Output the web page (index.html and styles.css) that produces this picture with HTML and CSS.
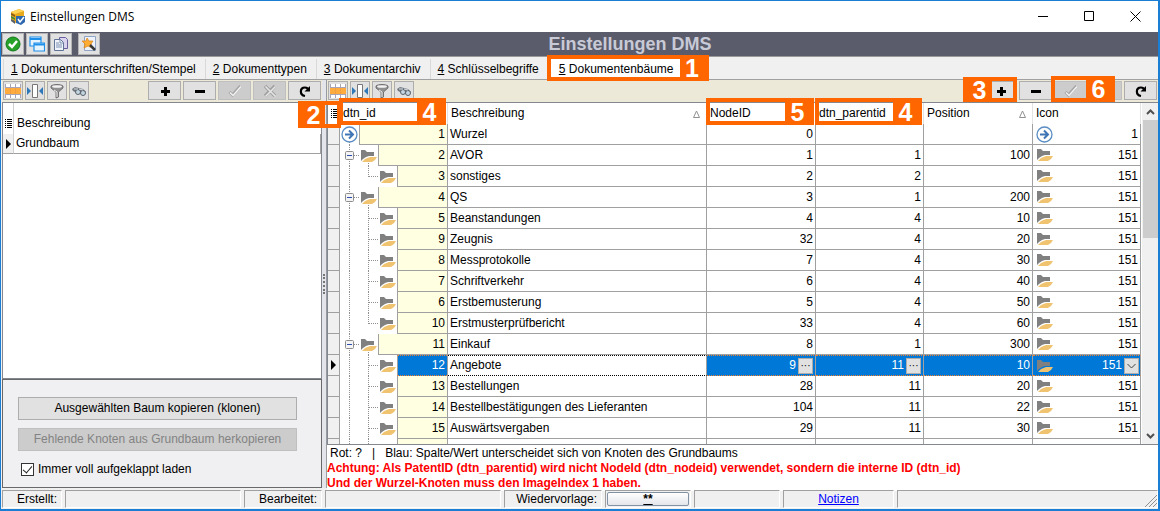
FILE: index.html
```html
<!DOCTYPE html>
<html lang="de">
<head>
<meta charset="utf-8">
<title>Einstellungen DMS</title>
<link rel="stylesheet" href="styles.css">
</head>
<body>
<svg class="defs" aria-hidden="true">
  <symbol id="folder" viewBox="0 0 17 14"><path fill="#808080" d="M1 1h4l2 2h7v4H9L6 8l-3 2-2 2z"/><path fill="#f0c370" d="M2 13l3-3 5-2h7l-2 3-3 2z"/></symbol>
  <symbol id="arrow" viewBox="0 0 17 17"><circle cx="8.500" cy="8.500" r="7.500" fill="#fff" stroke="#5a8dc4" stroke-width="1.300"/><path d="M4 8.500h8M8 4.500l4 4-4 4" fill="none" stroke="#3f74b5" stroke-width="2"/></symbol>
  <symbol id="minusbox" viewBox="0 0 9 9"><rect x=".5" y=".5" width="8" height="8" rx="1" fill="#f4f4f4" stroke="#8c8c8c"/><path d="M2 4.500h5" stroke="#2f4fb0"/></symbol>
  <symbol id="sort" viewBox="0 0 7 8"><path d="M3.500 1L6.500 7.500H.5z" fill="none" stroke="#909090"/></symbol>
  <symbol id="cols" viewBox="0 0 16 16"><path fill="#fff" d="M0 1h16v14H0z"/><path fill="#ffab3d" d="M0 5h16v6H0z"/><path d="M0 4.500h16M0 11.500h16M5.500 1v14M10.500 1v14M.5 1v14M15.500 1v14" stroke="#a9a3b8" fill="none"/><path d="M0 5h16v6H0z" fill="#ffab3d"/><path d="M5.500 5v6M10.500 5v6" stroke="#f0a040"/></symbol>
  <symbol id="fit" viewBox="0 0 16 16"><path d="M5.500 1.500h5v13h-5z" fill="#fff" stroke="#777"/><path fill="#2f78b8" d="M0 4l4 4-4 4zM16 4l-4 4 4 4z"/></symbol>
  <symbol id="funnel" viewBox="0 0 16 16"><path d="M2 3c2-2 10-2 12 0v2L9.500 9v5L7 15V9L2 5z" fill="#909090" stroke="#606060" stroke-width=".8"/><ellipse cx="8" cy="3.500" rx="5" ry="1.300" fill="#f2f2f2"/><path d="M5 7l3 2v5" stroke="#eee" fill="none"/></symbol>
  <symbol id="binoc" viewBox="0 0 16 16"><path d="M1 6l3-2 8 2 3 3-4 2-5-1-4-2z" fill="#707880"/><circle cx="7" cy="9" r="2.500" fill="#c3d5e0" stroke="#59626c"/><circle cx="12" cy="10" r="2.500" fill="#c3d5e0" stroke="#59626c"/><path d="M3 6l4 0M8 6l4 1" stroke="#d9dee2"/></symbol>
  <symbol id="plus" viewBox="0 0 16 16"><path d="M4 8.500h9M8.500 4v9" stroke="#000" stroke-width="3"/></symbol>
  <symbol id="minus" viewBox="0 0 16 16"><path d="M3 8.500h10" stroke="#000" stroke-width="3"/></symbol>
  <symbol id="check" viewBox="0 0 16 16"><path d="M2.500 9l3 3 8-9" fill="none" stroke="#a4a4a4" stroke-width="3"/><path d="M3 9.500l3 3 8-9" fill="none" stroke="#f2f2f2" stroke-width="1.500"/></symbol>
  <symbol id="cross" viewBox="0 0 16 16"><path d="M3 3l10 10M13 3L3 13" stroke="#a0a0a0" stroke-width="3.500"/><path d="M3.500 3.500l10 10M13.500 3.500l-10 10" stroke="#e6e6e6" stroke-width="1.500"/></symbol>
  <symbol id="refresh" viewBox="0 0 16 16"><path d="M8 13C2.500 12 2.500 4.500 8 4.500c2 0 3 1 3.500 2.500" fill="none" stroke="#000" stroke-width="2.200"/><path d="M13 3v5.500H7.500z"/></symbol>
  <symbol id="list" viewBox="0 0 8 11"><path d="M0 1.500h1M0 3.500h1M0 5.500h1M0 7.500h1M0 9.500h1M2 1.500h5M2 3.500h5M2 5.500h5M2 7.500h5M2 9.500h5" stroke="#000"/></symbol>
  <symbol id="current" viewBox="0 0 5 10"><path d="M0 0l5 5-5 5z"/></symbol>
</svg>
<div class="window">
  <header class="titlebar">
    <svg class="appicon" viewBox="0 0 16 16"><path fill="#e9a91c" d="M1 3l8-3 5 2v8l-9 4-4-4z"/><path fill="#ffd45a" d="M1 3l8-3 5 2-9 3z"/><path fill="#8a5a16" d="M1 4l4 2v2L1 6z"/><path fill="#3c8a4a" d="M1 7l4 2v2L1 9z"/><path fill="#59616b" d="M1 10l4 2v3l-4-3z"/><path fill="#2d67ae" d="M6 7h9v6l-4 3-5-2z"/><path d="M8 10l2 3 4-5" fill="none" stroke="#fff" stroke-width="1.500"/></svg>
    <span class="caption">Einstellungen DMS</span>
    <button class="winbtn" aria-label="Minimieren"><svg viewBox="0 0 11 11"><path d="M0 5.500h10" stroke="#000"/></svg></button>
    <button class="winbtn" aria-label="Maximieren"><svg viewBox="0 0 11 11"><path d="M.5 .5h9v9h-9z" fill="none" stroke="#000"/></svg></button>
    <button class="winbtn" aria-label="Schließen"><svg viewBox="0 0 11 11"><path d="M.5 .5l10 10M10.500 .5l-10 10" stroke="#000"/></svg></button>
  </header>
  <div class="banner">
    <button class="big" aria-label="OK"><svg viewBox="0 0 16 16"><circle cx="8" cy="8" r="7" fill="#27a229" stroke="#12791a"/><path d="M4 8l3 3 5-6" fill="none" stroke="#fff" stroke-width="2.500"/></svg></button>
    <button class="big" aria-label="Fenster"><svg viewBox="0 0 16 16"><path d="M1 1h11v9H1z" fill="#e6f4ff" stroke="#1e90ea" stroke-width="1.200"/><path d="M1 3h11" stroke="#1e90ea" stroke-width="2"/><path d="M5 7h10.500v8H5z" fill="#e6f4ff" stroke="#1e90ea" stroke-width="1.200"/><path d="M5 8.500h10" stroke="#1e90ea" stroke-width="2"/></svg></button>
    <button class="big" aria-label="Kopieren"><svg viewBox="0 0 16 16"><path d="M6.500 1.500h6l2 2v9h-8z" fill="#d9d3ee" stroke="#6a60a0"/><path d="M1.500 3.500h6l3 3v8h-9z" fill="#f0f4fa" stroke="#5f7396"/><path d="M7 4v3h3M3 7h3M3 9h6M3 11h6" fill="none" stroke="#7a8fb0"/></svg></button>
    <button class="big wizard" aria-label="Assistent"><svg viewBox="0 0 16 16"><path d="M3.500 .5h11v14h-11z" fill="#eef3fb" stroke="#90a5c6"/><path d="M6 2l2 3 4 0-2 3 1 4-4-2-4 2 1-4-3-3 4 0z" fill="#ffad33" stroke="#d98218" stroke-width=".7"/><path d="M9 9l5 5" stroke="#383838" stroke-width="2.500"/></svg></button>
    <h1>Einstellungen DMS</h1>
  </div>
  <nav class="tabs">
    <button class="tab"><u>1</u> Dokumentunterschriften/Stempel</button>
    <button class="tab"><u>2</u> Dokumenttypen</button>
    <button class="tab"><u>3</u> Dokumentarchiv</button>
    <button class="tab"><u>4</u> Schlüsselbegriffe</button>
    <button class="tab active"><u>5</u> Dokumentenbäume<span class="callout c-tab"><b>1</b></span></button>
  </nav>
  <main class="main">
    <section class="left">
      <div class="tools">
        <button class="tool" aria-label="Spalten"><svg><use href="#cols"/></svg></button>
        <button class="tool" aria-label="Breite"><svg><use href="#fit"/></svg></button>
        <button class="tool" aria-label="Filter"><svg><use href="#funnel"/></svg></button>
        <button class="tool" aria-label="Suchen"><svg><use href="#binoc"/></svg></button>
        <span class="space"></span>
        <button class="nav" aria-label="Neu"><svg><use href="#plus"/></svg></button>
        <button class="nav" aria-label="Löschen"><svg><use href="#minus"/></svg></button>
        <button class="nav" aria-label="Speichern" disabled><svg><use href="#check"/></svg></button>
        <button class="nav" aria-label="Abbrechen" disabled><svg><use href="#cross"/></svg></button>
        <button class="nav" aria-label="Aktualisieren"><svg><use href="#refresh"/></svg></button>
      </div>
      <div class="listbox">
        <table class="list">
          <thead><tr><th class="mark"><svg class="i-list"><use href="#list"/></svg></th><th>Beschreibung</th></tr></thead>
          <tbody><tr><td class="mark"><svg class="i-cur"><use href="#current"/></svg></td><td>Grundbaum</td></tr></tbody>
        </table>
      </div>
      <div class="options">
        <button class="action">Ausgewählten Baum kopieren (klonen)</button>
        <button class="action" disabled>Fehlende Knoten aus Grundbaum herkopieren</button>
        <label class="check"><input type="checkbox" checked>Immer voll aufgeklappt laden</label>
      </div>
    </section>
    <div class="splitter"><span></span></div>
    <section class="right">
      <div class="tools">
        <button class="tool" aria-label="Spalten"><svg><use href="#cols"/></svg></button>
        <button class="tool" aria-label="Breite"><svg><use href="#fit"/></svg></button>
        <button class="tool" aria-label="Filter"><svg><use href="#funnel"/></svg></button>
        <button class="tool" aria-label="Suchen"><svg><use href="#binoc"/></svg></button>
        <span class="space"></span>
        <button class="nav" aria-label="Neu"><svg><use href="#plus"/></svg><span class="callout c-plus"><b>3</b></span></button>
        <button class="nav" aria-label="Löschen"><svg><use href="#minus"/></svg></button>
        <button class="nav" aria-label="Speichern" disabled><svg><use href="#check"/></svg><span class="callout c-save"><b>6</b></span></button>
        <button class="nav" aria-label="Abbrechen" disabled><svg><use href="#cross"/></svg></button>
        <button class="nav" aria-label="Aktualisieren"><svg><use href="#refresh"/></svg></button>
      </div>
      <div class="gridbox">
        <table class="grid">
          <colgroup><col class="w-mark"><col class="w-num"><col><col class="w-wide"><col class="w-num"><col class="w-wide"><col class="w-num"></colgroup>
          <thead><tr>
            <th class="mark"><svg class="i-list"><use href="#list"/></svg><span class="callout c-mark"><b>2</b></span></th>
            <th>dtn_id<span class="callout c-col"><b>4</b></span></th>
            <th>Beschreibung<svg class="i-sort"><use href="#sort"/></svg></th>
            <th>NodeID<span class="callout c-col"><b>5</b></span></th>
            <th>dtn_parentid<span class="callout c-col"><b>4</b></span></th>
            <th>Position<svg class="i-sort"><use href="#sort"/></svg></th>
            <th>Icon</th>
          </tr></thead>
          <tbody>
            <tr><td class="mark"></td><td class="tree"><div><i class="slot root"><svg class="i-arrow"><use href="#arrow"/></svg></i><span>1</span></div></td><td>Wurzel</td><td class="n">0</td><td class="n"></td><td class="n"></td><td class="ic"><div><svg class="i-arrow"><use href="#arrow"/></svg><span>1</span></div></td></tr>
            <tr><td class="mark"></td><td class="tree"><div><i class="slot v h"><svg class="i-box"><use href="#minusbox"/></svg></i><i class="slot tail"><svg class="i-folder"><use href="#folder"/></svg></i><span>2</span></div></td><td>AVOR</td><td class="n">1</td><td class="n">1</td><td class="n">100</td><td class="ic"><div><svg class="i-folder"><use href="#folder"/></svg><span>151</span></div></td></tr>
            <tr><td class="mark"></td><td class="tree"><div><i class="slot v"></i><i class="slot last h"></i><i class="slot"><svg class="i-folder"><use href="#folder"/></svg></i><span>3</span></div></td><td>sonstiges</td><td class="n">2</td><td class="n">2</td><td class="n"></td><td class="ic"><div><svg class="i-folder"><use href="#folder"/></svg><span>151</span></div></td></tr>
            <tr><td class="mark"></td><td class="tree"><div><i class="slot v h"><svg class="i-box"><use href="#minusbox"/></svg></i><i class="slot tail"><svg class="i-folder"><use href="#folder"/></svg></i><span>4</span></div></td><td>QS</td><td class="n">3</td><td class="n">1</td><td class="n">200</td><td class="ic"><div><svg class="i-folder"><use href="#folder"/></svg><span>151</span></div></td></tr>
            <tr><td class="mark"></td><td class="tree"><div><i class="slot v"></i><i class="slot v h"></i><i class="slot"><svg class="i-folder"><use href="#folder"/></svg></i><span>5</span></div></td><td>Beanstandungen</td><td class="n">4</td><td class="n">4</td><td class="n">10</td><td class="ic"><div><svg class="i-folder"><use href="#folder"/></svg><span>151</span></div></td></tr>
            <tr><td class="mark"></td><td class="tree"><div><i class="slot v"></i><i class="slot v h"></i><i class="slot"><svg class="i-folder"><use href="#folder"/></svg></i><span>9</span></div></td><td>Zeugnis</td><td class="n">32</td><td class="n">4</td><td class="n">20</td><td class="ic"><div><svg class="i-folder"><use href="#folder"/></svg><span>151</span></div></td></tr>
            <tr><td class="mark"></td><td class="tree"><div><i class="slot v"></i><i class="slot v h"></i><i class="slot"><svg class="i-folder"><use href="#folder"/></svg></i><span>8</span></div></td><td>Messprotokolle</td><td class="n">7</td><td class="n">4</td><td class="n">30</td><td class="ic"><div><svg class="i-folder"><use href="#folder"/></svg><span>151</span></div></td></tr>
            <tr><td class="mark"></td><td class="tree"><div><i class="slot v"></i><i class="slot v h"></i><i class="slot"><svg class="i-folder"><use href="#folder"/></svg></i><span>7</span></div></td><td>Schriftverkehr</td><td class="n">6</td><td class="n">4</td><td class="n">40</td><td class="ic"><div><svg class="i-folder"><use href="#folder"/></svg><span>151</span></div></td></tr>
            <tr><td class="mark"></td><td class="tree"><div><i class="slot v"></i><i class="slot v h"></i><i class="slot"><svg class="i-folder"><use href="#folder"/></svg></i><span>6</span></div></td><td>Erstbemusterung</td><td class="n">5</td><td class="n">4</td><td class="n">50</td><td class="ic"><div><svg class="i-folder"><use href="#folder"/></svg><span>151</span></div></td></tr>
            <tr><td class="mark"></td><td class="tree"><div><i class="slot v"></i><i class="slot last h"></i><i class="slot"><svg class="i-folder"><use href="#folder"/></svg></i><span>10</span></div></td><td>Erstmusterprüfbericht</td><td class="n">33</td><td class="n">4</td><td class="n">60</td><td class="ic"><div><svg class="i-folder"><use href="#folder"/></svg><span>151</span></div></td></tr>
            <tr><td class="mark"></td><td class="tree"><div><i class="slot v h"><svg class="i-box"><use href="#minusbox"/></svg></i><i class="slot tail"><svg class="i-folder"><use href="#folder"/></svg></i><span>11</span></div></td><td>Einkauf</td><td class="n">8</td><td class="n">1</td><td class="n">300</td><td class="ic"><div><svg class="i-folder"><use href="#folder"/></svg><span>151</span></div></td></tr>
            <tr class="sel"><td class="mark"><svg class="i-cur"><use href="#current"/></svg></td><td class="tree"><div><i class="slot v"></i><i class="slot v h"></i><i class="slot"><svg class="i-folder"><use href="#folder"/></svg></i><span>12</span></div></td><td class="focus">Angebote</td><td class="n edit"><div>9<button class="cellbtn" aria-label="NodeID wählen">···</button></div></td><td class="n edit"><div>11<button class="cellbtn" aria-label="Knoten wählen">···</button></div></td><td class="n">10</td><td class="ic"><div><svg class="i-folder"><use href="#folder"/></svg><span>151</span><button class="cellbtn" aria-label="Icon wählen"><svg class="i-chev" viewBox="0 0 9 6"><path d="M.5 1l4 4 4-4" fill="none" stroke="#444"/></svg></button></div></td></tr>
            <tr><td class="mark"></td><td class="tree"><div><i class="slot v"></i><i class="slot v h"></i><i class="slot"><svg class="i-folder"><use href="#folder"/></svg></i><span>13</span></div></td><td>Bestellungen</td><td class="n">28</td><td class="n">11</td><td class="n">20</td><td class="ic"><div><svg class="i-folder"><use href="#folder"/></svg><span>151</span></div></td></tr>
            <tr><td class="mark"></td><td class="tree"><div><i class="slot v"></i><i class="slot v h"></i><i class="slot"><svg class="i-folder"><use href="#folder"/></svg></i><span>14</span></div></td><td>Bestellbestätigungen des Lieferanten</td><td class="n">104</td><td class="n">11</td><td class="n">22</td><td class="ic"><div><svg class="i-folder"><use href="#folder"/></svg><span>151</span></div></td></tr>
            <tr><td class="mark"></td><td class="tree"><div><i class="slot v"></i><i class="slot v h"></i><i class="slot"><svg class="i-folder"><use href="#folder"/></svg></i><span>15</span></div></td><td>Auswärtsvergaben</td><td class="n">29</td><td class="n">11</td><td class="n">30</td><td class="ic"><div><svg class="i-folder"><use href="#folder"/></svg><span>151</span></div></td></tr>
            <tr class="cut"><td class="mark"></td><td class="tree"><div><i class="slot v"></i><i class="slot v"></i><i class="slot"></i><span></span></div></td><td></td><td></td><td></td><td></td><td></td></tr>
          </tbody>
        </table>
        <div class="scroll"><svg viewBox="0 0 9 6"><path d="M1 5l3.500-3.500L8 5" fill="none" stroke="#505050" stroke-width="2"/></svg><span class="thumb"></span><svg viewBox="0 0 9 6"><path d="M1 1l3.500 3.500L8 1" fill="none" stroke="#505050" stroke-width="2"/></svg></div>
      </div>
      <div class="info">
        <p class="legend">Rot: ? &nbsp; | &nbsp; Blau: Spalte/Wert unterscheidet sich von Knoten des Grundbaums</p>
        <p class="warn">Achtung: Als PatentID (dtn_parentid) wird nicht NodeId (dtn_nodeid) verwendet, sondern die interne ID (dtn_id)</p>
        <p class="warn">Und der Wurzel-Knoten muss den ImageIndex 1 haben.</p>
      </div>
    </section>
  </main>
  <footer class="status">
    <span class="cell s-a">Erstellt:</span><span class="cell s-b"></span>
    <span class="cell s-c">Bearbeitet:</span><span class="cell s-b"></span>
    <span class="cell s-d">Wiedervorlage:</span>
    <span class="cell s-e"><button class="stars"><u>**</u></button></span><span class="cell s-e"></span>
    <span class="cell s-f"><a href="#">Notizen</a></span>
    <span class="cell s-g"><svg viewBox="0 0 12 12"><path d="M0 12L12 0M4 12l8-8M8 12l4-4" stroke="#909090" fill="none"/></svg></span>
  </footer>
</div>
</body>
</html>
```
FILE: styles.css
```css
* { box-sizing: border-box; }
body { margin: 0; font: 12px/15px "Liberation Sans", Arial, sans-serif; color: #000; }
button { font: inherit; color: inherit; margin: 0; padding: 0; border: 0; background: none; }
svg { display: block; flex: none; }
.defs { display: none; }
.window { height: 100vh; display: flex; flex-direction: column; border: 1px solid #1a7fd4; border-width: 1px 2px 2px 1px; background: #f0f0f0; }

.titlebar { height: 31px; flex: none; display: flex; align-items: center; background: #fff; padding-left: 9px; }
.appicon { width: 16px; height: 16px; }
.caption { flex: 1; margin-left: 4px; font: 12px/16px "Open Sans", "Noto Sans", sans-serif; }
.winbtn { width: 46px; height: 30px; display: flex; align-items: center; justify-content: center; }
.winbtn svg { width: 11px; height: 11px; }

.banner { height: 25px; flex: none; display: flex; align-items: center; gap: 2px; padding-left: 1px; background: #5a5c6c; border-bottom: 1px solid #999; }
.banner h1 { flex: 1; margin: 0; text-align: center; font-size: 18px; line-height: 22px; color: #c8cad6; }
.big { width: 22px; height: 22px; display: flex; align-items: center; justify-content: center; background: #e1e1e1; border: 1px solid #b4b4b4; }
.big svg { width: 16px; height: 16px; }
.wizard { margin-left: 4px; }

.tabs { height: 23px; flex: none; display: flex; align-items: stretch; padding: 2px 0 0 2px; border-bottom: 1px solid #a0a0a0; }
.tab { position: relative; padding: 0 9px 0 7px; border-right: 1px solid #d9d9d9; white-space: nowrap; }
.tab:first-child { border-left: 1px solid #d9d9d9; }
.tab.active { background: #fff; padding: 0 10px; border: 0; }

.main { flex: 1; min-height: 0; display: flex; }
.left { width: 321px; flex: none; display: flex; flex-direction: column; padding-left: 1px; }
.right { flex: 1; min-width: 0; display: flex; flex-direction: column; }
.tools { height: 22px; flex: none; display: flex; gap: 2px; padding: 1px; background: #ece9d8; }
.space { flex: 1; }
.tool, .nav { position: relative; display: flex; align-items: center; justify-content: center; height: 19px; background: #e1e1e1; border: 1px solid #adadad; }
.tool { width: 20px; }
.nav { width: 33px; }
.tool svg, .nav svg { width: 16px; height: 16px; }
.nav:disabled { background: #ccc; border-color: #bfbfbf; }

.listbox { flex: 1; background: #fff; border: 1px solid #828790; }
table { border-collapse: separate; border-spacing: 0; width: 100%; table-layout: fixed; }
th { font-weight: normal; text-align: left; }
th, td { padding: 0; }
.list .mark { width: 11px; }
.list th { height: 31px; padding: 10px 0 0 3px; }
.list .mark { padding-left: 2px; border-right: 1px solid #d0d0d0; }
.list td { height: 20px; padding-left: 2px; border-bottom: 1px solid #a0a0a0; border-right: 1px solid #a0a0a0; }
.list td.mark { background: #f0f0f0; padding-left: 3px; }
.i-list { width: 8px; height: 11px; }
.i-cur { width: 5px; height: 10px; }
.options { height: 109px; flex: none; display: flex; flex-direction: column; gap: 8px; padding: 17px 24px 0 15px; background: #f0f0f2; border: 1px solid #696969; }
.action { height: 23px; background: #e1e1e1; border: 1px solid #adadad; }
.action:disabled { background: #ccc; border-color: #bfbfbf; color: #838383; }
.check { display: flex; align-items: center; gap: 4px; margin: 3px 0 0 3px; }
.check input { appearance: none; width: 13px; height: 13px; margin: 0; border: 1px solid #333; background: #fff; display: grid; place-items: center; }
.check input::before { content: ""; width: 4px; height: 8px; border: solid #222; border-width: 0 1px 1px 0; transform: rotate(40deg); margin-top: -2px; }

.splitter { width: 5px; flex: none; display: flex; align-items: center; justify-content: center; background: #e3e5ea; border-right: 1px solid #989ba2; }
.splitter span { height: 20px; border-left: 2px dotted #777; }

.gridbox { flex: 1; display: flex; gap: 1px; background: #fff; border: solid #828790; border-width: 1px 0 1px 1px; }
.grid { flex: 1; }
.w-mark { width: 12px; }
.w-num { width: 108px; }
.w-wide { width: 109px; }
.grid th { position: relative; height: 21px; padding-left: 3px; border-right: 1px solid #e2e2e2; }
.i-sort { position: absolute; right: 6px; top: 7px; width: 7px; height: 8px; }
.grid td { height: 21px; padding-left: 2px; border: solid #a0a0a0; border-width: 0 1px 1px 0; white-space: nowrap; }
.grid td.mark { background: #f0f0f0; padding-left: 3px; }
.grid td.n { text-align: right; padding-right: 2px; }
.grid td.tree { padding: 0; border-bottom: 0; }
.grid td.ic { padding-left: 3px; }
.tree div { display: flex; height: 21px; }
.tree span { flex: 1; padding: 3px 2px 0 0; text-align: right; background: #ffffe1; border: solid #a0a0a0; border-width: 0 0 1px 1px; }
.slot { position: relative; width: 19px; flex: none; display: grid; place-items: center; }
.slot svg { position: relative; }
.slot.v::before, .slot.last::before, .slot.root::before, .slot.tail::before { content: ""; position: absolute; left: 9px; top: 0; bottom: 0; border-left: 1px dotted #909090; }
.slot.last::before { bottom: 10px; }
.slot.root::before, .slot.tail::before { top: 18px; }
.slot.h::after { content: ""; position: absolute; left: 9px; right: 0; top: 10px; border-top: 1px dotted #909090; }
.slot.h svg { z-index: 1; }
.i-folder { width: 17px; height: 14px; }
.i-arrow { width: 17px; height: 17px; }
.i-box { width: 9px; height: 9px; }
.ic div { display: flex; align-items: center; justify-content: space-between; height: 20px; padding-right: 2px; }
.edit div { display: flex; align-items: center; justify-content: flex-end; gap: 2px; height: 18px; }
.cellbtn { width: 15px; height: 16px; display: flex; align-items: center; justify-content: center; background: #e1e1e1; border: 1px solid #adadad; color: #000; font-size: 10px; }
.i-chev { width: 9px; height: 6px; }
.grid .sel td:not(.mark):not(.tree), .sel .tree span { background: #0078d7; color: #fff; border-top: 1px dotted #f08030; border-bottom: 1px dotted #f08030; }
.sel .tree span { padding-top: 2px; }
.grid .sel td.focus:not(.mark) { background: #fff; color: #000; border-top-color: #000; border-bottom-color: #000; }
.sel .ic div { height: 18px; gap: 2px; padding-right: 1px; }
.sel .ic span { flex: 1; text-align: right; }
.grid .cut td { height: 5px; border-bottom: 0; }
.cut .tree div { height: 5px; }
.cut .tree span { padding: 0; border-bottom: 0; }
.scroll { width: 16px; flex: none; display: flex; flex-direction: column; align-items: center; background: #f0f0f0; padding: 6px 0 5px; }
.scroll svg { width: 9px; height: 6px; }
.scroll .thumb { width: 15px; height: 118px; margin: 5px 0 auto; background: #cdcdcd; }
.info { flex: none; background: #fff; padding: 1px 0 0; }
.info p { margin: 0; white-space: nowrap; }
.legend { text-indent: 3px; }
.warn { color: #f00; font-weight: bold; }

.status { flex: none; display: flex; gap: 3px; height: 21px; padding: 2px 0 0 1px; }
.cell { position: relative; flex: none; height: 18px; display: flex; align-items: center; border: 1px solid #fff; border-top-color: #a0a0a0; border-left-color: #a0a0a0; }
.s-a { width: 60px; justify-content: flex-end; padding-right: 4px; }
.s-b { width: 176px; }
.s-c { width: 78px; justify-content: flex-end; padding-right: 4px; }
.s-d { width: 98px; justify-content: flex-end; padding-right: 4px; }
.s-e { width: 86px; }
.s-f { width: 111px; justify-content: center; }
.s-f a { color: #00f; }
.s-g { flex: 1; justify-content: flex-end; align-items: flex-end; }
.s-g svg { width: 12px; height: 12px; }
.stars { flex: 1; height: 14px; margin: 0 1px; line-height: 12px; font-weight: bold; background: linear-gradient(#fff, #e2e5ea); border: 1px solid #8391a5; border-radius: 2px; }

.callout { position: absolute; z-index: 3; border: 4px solid #ff6600; display: flex; justify-content: flex-end; pointer-events: none; }
.callout b { display: flex; align-items: center; justify-content: center; width: 25px; background: #ff6600; color: #fff; font-size: 25px; line-height: 18px; }
.c-tab { left: -2px; right: -25px; top: -4px; bottom: -2px; }
.c-col { left: -1px; right: 1px; top: -5px; bottom: -1px; }
.c-mark { left: -30px; right: -2px; top: -2px; bottom: -4px; justify-content: flex-start; }
.c-mark b { width: 23px; }
.c-plus { left: -22px; right: -1px; top: -5px; bottom: -3px; justify-content: flex-start; }
.c-save { left: -4px; right: -29px; top: -6px; bottom: -3px; }
```
